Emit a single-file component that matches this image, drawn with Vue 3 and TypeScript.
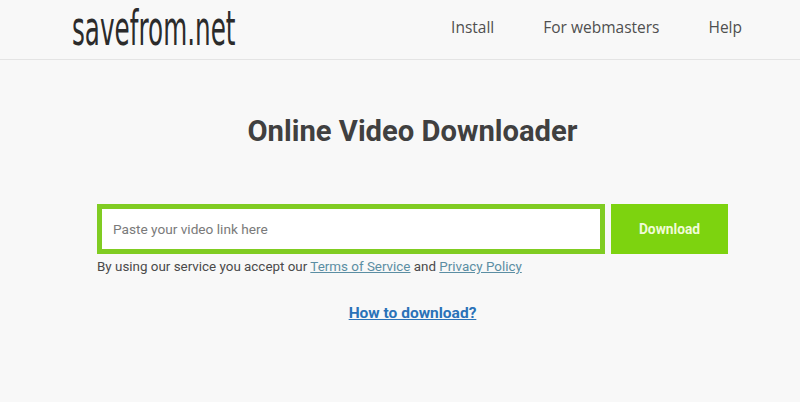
<script setup lang="ts">
const navItems: string[] = ['Install', 'For webmasters', 'Help']
</script>

<template>
  <div class="page">
    <header class="header">
      <a class="logo" href="#">savefrom.net</a>
      <nav class="nav">
        <a v-for="item in navItems" :key="item" href="#">{{ item }}</a>
      </nav>
    </header>
    <main class="main">
      <h1 class="title">Online Video Downloader</h1>
      <form class="form" @submit.prevent>
        <input class="field" type="text" placeholder="Paste your video link here" />
        <button class="submit" type="submit">Download</button>
      </form>
      <p class="terms">By using our service you accept our <a href="#">Terms of Service</a> and <a href="#">Privacy Policy</a></p>
      <a class="how" href="#">How to download?</a>
    </main>
  </div>
</template>

<style>
html, body { margin: 0; background: #f8f8f8; }
</style>

<style scoped>
.page { width: 800px; height: 402px; overflow: hidden; background: #f8f8f8; font-family: Roboto, sans-serif; }
.header { height: 59px; border-bottom: 1px solid #e4e4e4; display: flex; align-items: center; justify-content: space-between; padding: 0 58px 0 72px; }
.logo { align-self: flex-start; font-family: "DejaVu Sans", sans-serif; font-size: 48px; line-height: 57px; color: #2b2b2b; text-decoration: none; display: inline-block; flex: none; transform: scaleX(0.514); transform-origin: left center; white-space: nowrap; }
.nav { display: flex; gap: 49px; font-family: "Open Sans", sans-serif; font-size: 15.5px; margin-top: -5px; }
.nav a { color: #4f4f4f; text-decoration: none; }
.main { display: flex; flex-direction: column; padding-left: 97px; }
.title { width: 631px; margin: 55px 0 0; text-align: center; font-size: 29.2px; line-height: 32px; font-weight: 700; color: #404040; }
.form { display: flex; gap: 6px; margin-top: 57px; }
.field { box-sizing: border-box; width: 508px; height: 50px; border: 5px solid #80cc22; background: #fff; padding: 0 11px; font-family: Roboto, sans-serif; font-size: 13.65px; outline: none; border-radius: 0; }
.field::placeholder { color: #7a7a7a; opacity: 1; }
.submit { width: 117px; height: 50px; border: 0; background: #7dd30f; color: #f0fbd8; font-family: Roboto, sans-serif; font-size: 13.8px; font-weight: 700; padding: 0; }
.terms { margin: 4px 0 0; font-size: 13.4px; line-height: 18px; color: #4a4a4a; }
.terms a { color: #5b8ea3; }
.how { width: 631px; margin-top: 27px; text-align: center; font-size: 15.5px; line-height: 20px; font-weight: 700; color: #2a72b8; }
</style>
